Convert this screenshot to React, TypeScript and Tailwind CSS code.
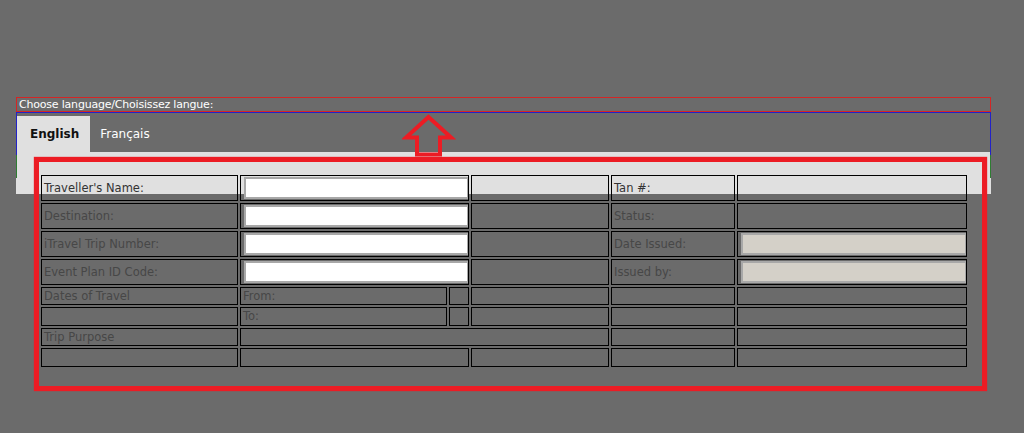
import React from "react";

const cell = "border border-black p-0 pl-[2px] align-middle whitespace-nowrap overflow-hidden";

function TextInput({ disabled }: { disabled?: boolean }) {
  return (
    <input
      readOnly
      className={
        "block h-[22px] ml-[1px] border-2 border-[#a8a8a8] outline-none " +
        (disabled ? "w-[226px] bg-[#d4d0c8] border-[#9e9e9e]" : "w-[225px] bg-white")
      }
    />
  );
}

export default function App() {
  const dim = "text-[#474747]";
  return (
    <div
      className="relative min-h-[433px] w-[1024px] bg-[#6b6b6b] pt-[97px] pl-[16px] overflow-hidden"
      style={{ fontFamily: '"DejaVu Sans", Verdana, sans-serif' }}
    >
      {/* language label */}
      <div className="w-[975px] h-[15px] border border-[#d42525] text-white text-[11px] leading-[13px] pl-[2px] tracking-[-0.2px]">
        Choose language/Choisissez langue:
      </div>

      {/* tabs */}
      <div className="w-[975px] h-[40px] border border-b-0 border-[#2222c8] pt-[3px]">
        <div className="flex h-[36px] text-[12px]">
          <div className="flex items-center bg-[#e0e0e0] pl-[13px] pr-[11px] font-bold text-[#111]">English</div>
          <div className="flex items-center px-[10px] text-white">Français</div>
        </div>
      </div>

      {/* panel */}
      <div className="w-[975px] h-[42px] bg-[#e0e0e0]">
        <div className="h-[3px] border-x border-[#2222c8]" />
        <div className="h-[23px] border-x border-[#2e7d32] pt-[18px] pl-[22px]">
          <table className="table-fixed w-[930px] border-separate border-spacing-[2px] text-[11.5px] leading-[13px] text-[#333]">
            <colgroup>
              <col className="w-[197px]" />
              <col className="w-[207px]" />
              <col className="w-[20px]" />
              <col className="w-[138px]" />
              <col className="w-[124px]" />
              <col className="w-[230px]" />
            </colgroup>
            <tbody>
              <tr className="h-[26px]">
                <td className={cell}>Traveller's Name:</td>
                <td className={cell} colSpan={2}><TextInput /></td>
                <td className={cell}></td>
                <td className={cell}>Tan #:</td>
                <td className={cell}></td>
              </tr>
              <tr className={"h-[26px] " + dim}>
                <td className={cell}>Destination:</td>
                <td className={cell} colSpan={2}><TextInput /></td>
                <td className={cell}></td>
                <td className={cell}>Status:</td>
                <td className={cell}></td>
              </tr>
              <tr className={"h-[26px] " + dim}>
                <td className={cell}>iTravel Trip Number:</td>
                <td className={cell} colSpan={2}><TextInput /></td>
                <td className={cell}></td>
                <td className={cell}>Date Issued:</td>
                <td className={cell}><TextInput disabled /></td>
              </tr>
              <tr className={"h-[26px] " + dim}>
                <td className={cell}>Event Plan ID Code:</td>
                <td className={cell} colSpan={2}><TextInput /></td>
                <td className={cell}></td>
                <td className={cell}>Issued by:</td>
                <td className={cell}><TextInput disabled /></td>
              </tr>
              <tr className={"h-[18px] " + dim}>
                <td className={cell}>Dates of Travel</td>
                <td className={cell}>From:</td>
                <td className={cell}></td>
                <td className={cell}></td>
                <td className={cell}></td>
                <td className={cell}></td>
              </tr>
              <tr className={"h-[19px] " + dim}>
                <td className={cell}></td>
                <td className={cell}>To:</td>
                <td className={cell}></td>
                <td className={cell}></td>
                <td className={cell}></td>
                <td className={cell}></td>
              </tr>
              <tr className={"h-[18px] " + dim}>
                <td className={cell}>Trip Purpose</td>
                <td className={cell} colSpan={3}></td>
                <td className={cell}></td>
                <td className={cell}></td>
              </tr>
              <tr className={"h-[19px] " + dim}>
                <td className={cell}></td>
                <td className={cell} colSpan={2}></td>
                <td className={cell}></td>
                <td className={cell}></td>
                <td className={cell}></td>
              </tr>
            </tbody>
          </table>
        </div>
      </div>

      {/* annotation: arrow */}
      <svg className="absolute left-[402px] top-[113px]" width="54" height="46" viewBox="402 113 54 46">
        <polygon
          points="428.5,117 451,137.5 440,137.5 440,154.5 417,154.5 417,137.5 406,137.5"
          fill="none"
          stroke="#ec1c24"
          strokeWidth="4"
          strokeLinejoin="miter"
        />
      </svg>

      {/* annotation: frame */}
      <div className="absolute left-[34px] top-[157px] w-[953px] h-[234px] border-[5px] border-[#ec1c24] shadow-[0_0_1px_#ec1c24]" />
    </div>
  );
}
